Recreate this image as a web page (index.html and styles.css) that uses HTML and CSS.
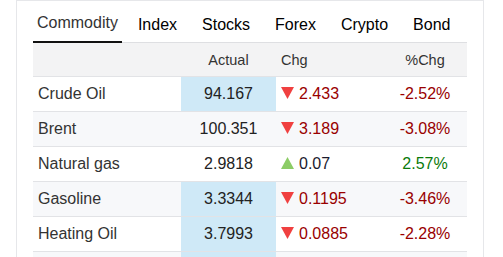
FILE: index.html
```html
<!DOCTYPE html>
<html>
<head>
<meta charset="utf-8">
<link rel="stylesheet" href="styles.css">
</head>
<body>
<div class="card">
  <nav class="tabs">
    <span class="tab active">Commodity</span>
    <span class="tab">Index</span>
    <span class="tab">Stocks</span>
    <span class="tab">Forex</span>
    <span class="tab">Crypto</span>
    <span class="tab">Bond</span>
  </nav>
  <table class="quotes">
    <colgroup>
      <col class="c-name"><col class="c-actual"><col class="c-chg"><col class="c-pct">
    </colgroup>
    <thead>
      <tr><th></th><th class="center">Actual</th><th class="left">Chg</th><th class="center">%Chg</th></tr>
    </thead>
    <tbody>
      <tr>
        <td class="name">Crude Oil</td><td class="actual hl">94.167</td>
        <td class="chg down"><svg class="tri" width="13" height="12" viewBox="0 0 13 12"><polygon points="0,0 13,0 6.5,12"/></svg>2.433</td>
        <td class="pct down">-2.52%</td>
      </tr>
      <tr>
        <td class="name">Brent</td><td class="actual">100.351</td>
        <td class="chg down"><svg class="tri" width="13" height="12" viewBox="0 0 13 12"><polygon points="0,0 13,0 6.5,12"/></svg>3.189</td>
        <td class="pct down">-3.08%</td>
      </tr>
      <tr>
        <td class="name">Natural gas</td><td class="actual">2.9818</td>
        <td class="chg up"><svg class="tri" width="13" height="12" viewBox="0 0 13 12"><polygon points="6.5,0 13,12 0,12"/></svg>0.07</td>
        <td class="pct up">2.57%</td>
      </tr>
      <tr>
        <td class="name">Gasoline</td><td class="actual hl">3.3344</td>
        <td class="chg down"><svg class="tri" width="13" height="12" viewBox="0 0 13 12"><polygon points="0,0 13,0 6.5,12"/></svg>0.1195</td>
        <td class="pct down">-3.46%</td>
      </tr>
      <tr>
        <td class="name">Heating Oil</td><td class="actual hl">3.7993</td>
        <td class="chg down"><svg class="tri" width="13" height="12" viewBox="0 0 13 12"><polygon points="0,0 13,0 6.5,12"/></svg>0.0885</td>
        <td class="pct down">-2.28%</td>
      </tr>
      <tr class="partial">
        <td class="name"></td><td class="actual hl"></td><td class="chg"></td><td class="pct"></td>
      </tr>
    </tbody>
  </table>
</div>
</body>
</html>
```
FILE: styles.css
```css
html, body {
  margin: 0;
  padding: 0;
  background: #ffffff;
  overflow: hidden;
}
body {
  font-family: Arial, "Liberation Sans", sans-serif;
  color: #333333;
  height: 257px;
}
.card {
  margin-left: 16px;
  width: 468px;
  height: 257px;
  box-sizing: border-box;
  border: 1px solid #e6e7ea;
  border-bottom: 0;
  padding: 0 16px;
  background: #ffffff;
  overflow: hidden;
}
.tabs {
  display: flex;
  gap: 17px;
  border-bottom: 1px solid #dedfe2;
  height: 41px;
}
.tab {
  font-size: 16px;
  line-height: 20px;
  padding: 14px 4px 6px;
  color: #000000;
  white-space: nowrap;
}
.tab.active {
  color: #333333;
  padding-top: 12px;
  padding-bottom: 8px;
  border-bottom: 2px solid #111111;
  height: 20px;
  margin-right: -5px;
}
.quotes {
  width: 434px;
  border-collapse: collapse;
  table-layout: fixed;
}
.c-name { width: 148px; }
.c-actual { width: 95px; }
.c-chg { width: 107px; }
.c-pct { width: 84px; }
thead tr {
  background: #f3f3f4;
}
th {
  height: 33px;
  padding: 0;
  font-size: 14.5px;
  font-weight: normal;
  color: #333333;
  border-bottom: 1px solid #e2e3e6;
}
th.center { text-align: center; }
th.left { text-align: left; padding-left: 5px; }
tbody tr:nth-child(even) {
  background: #f7f8fa;
}
td {
  height: 34px;
  padding: 0;
  font-size: 16px;
  border-bottom: 1px solid #e2e3e6;
  white-space: nowrap;
}
tr.partial td {
  height: 5px;
  border-bottom: 0;
}
td.name {
  padding-left: 5px;
  color: #333333;
}
td.actual {
  text-align: center;
  color: #222222;
}
td.hl {
  background: #cfe9f7;
}
td.chg {
  padding-left: 5px;
}
.tri {
  margin-right: 5px;
}
td.chg.down { color: #990000; }
td.chg.down .tri { fill: #f04040; }
td.chg.up { color: #1a1a2e; }
td.chg.up .tri { fill: #8ccc66; }
td.pct {
  text-align: center;
}
td.pct.down { color: #990000; }
td.pct.up { color: #0a7a0a; }
```
